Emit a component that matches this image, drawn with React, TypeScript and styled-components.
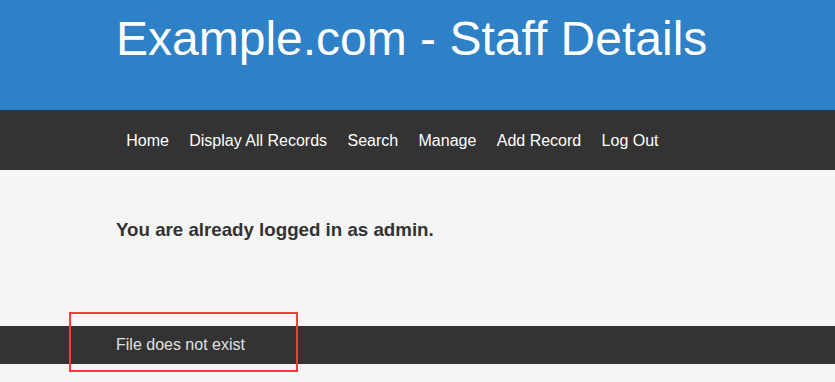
import React from 'react'
import styled, { createGlobalStyle } from 'styled-components'

const navItems = ['Home', 'Display All Records', 'Search', 'Manage', 'Add Record', 'Log Out']

export default function App() {
    return (
        <Page>
            <GlobalStyle />
            <Header>
                <Title>Example.com - Staff Details</Title>
            </Header>
            <Nav>
                {navItems.map((item) => (
                    <NavLink key={item} href="#">
                        {item}
                    </NavLink>
                ))}
            </Nav>
            <Main>
                <Message>You are already logged in as admin.</Message>
            </Main>
            <Footer>
                <FooterText>File does not exist</FooterText>
                <Highlight />
            </Footer>
        </Page>
    )
}

const GlobalStyle = createGlobalStyle`
    html, body {
        margin: 0;
        padding: 0;
        background: #f5f5f5;
        font-family: "Liberation Sans", Arial, sans-serif;
    }
`

const Page = styled.div`
    display: flex;
    flex-direction: column;
    min-height: 382px;
    background: #f5f5f5;
`

const Header = styled.header`
    background: #2e80c7;
    height: 110px;
    padding: 0 0 0 116px;
    box-sizing: border-box;
`

const Title = styled.h1`
    margin: 0;
    padding-top: 11px;
    font-size: 48px;
    font-weight: 400;
    line-height: 56px;
    color: #fff;
`

const Nav = styled.nav`
    display: flex;
    align-items: center;
    height: 60px;
    background: #333;
    padding: 2px 0 0 116px;
    box-sizing: border-box;
`

const NavLink = styled.a`
    color: #fff;
    text-decoration: none;
    font-size: 16px;
    padding: 0 10.2px;
`

const Main = styled.main`
    height: 156px;
    padding: 49px 0 0 116px;
    box-sizing: border-box;
`

const Message = styled.h3`
    margin: 0;
    font-size: 18.72px;
    line-height: 22px;
    font-weight: 700;
    color: #333;
`

const Footer = styled.footer`
    position: relative;
    display: flex;
    align-items: center;
    height: 38px;
    background: #333;
    padding-left: 116px;
`

const FooterText = styled.span`
    font-size: 16px;
    color: #e0e0e0;
`

const Highlight = styled.div`
    position: absolute;
    left: 69px;
    top: -14px;
    width: 229px;
    height: 60px;
    box-sizing: border-box;
    border: 2px solid #f63c3c;
`
